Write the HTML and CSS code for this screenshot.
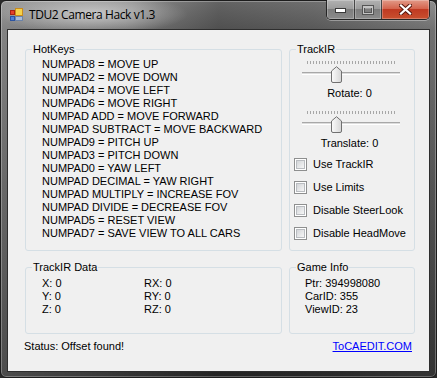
FILE: index.html
```html
<!DOCTYPE html>
<html>
<head>
<meta charset="utf-8">
<title>TDU2 Camera Hack v1.3</title>
<link rel="stylesheet" href="styles.css">
</head>
<body>
<div class="window">
  <div class="titlebar">
    <svg class="appicon" width="16" height="16" viewBox="0 0 16 16">
      <rect x="7.5" y="1.5" width="7" height="7" fill="#f6d24a" stroke="#c98a1c"/>
      <rect x="2.5" y="3.5" width="4" height="4" fill="#e2412b" stroke="#a82414"/>
      <rect x="2.5" y="9.5" width="4" height="4" fill="#4f7fd6" stroke="#2d54a0"/>
      <rect x="7.5" y="9.5" width="7" height="4" fill="#a9bcd8" stroke="#6c83a8"/>
    </svg>
    <span class="title">TDU2 Camera Hack v1.3</span>
    <div class="caps">
      <div class="cap min">
        <svg width="12" height="6" viewBox="0 0 12 6"><rect x="0.5" y="0.5" width="10" height="4" fill="#fff" stroke="#3a3a3a"/></svg>
      </div>
      <div class="cap max">
        <svg width="12" height="10" viewBox="0 0 12 10"><rect x="1.5" y="1.5" width="9" height="7" fill="none" stroke="#555" stroke-width="3"/><rect x="1.5" y="1.5" width="9" height="7" fill="none" stroke="#c4c4c4" stroke-width="1"/><rect x="2" y="2" width="8" height="1" fill="#c4c4c4"/></svg>
      </div>
      <div class="cap close">
        <svg width="13" height="11" viewBox="0 0 13 11"><path d="M2 1.5 L11 9.5 M11 1.5 L2 9.5" stroke="#5a1a10" stroke-width="4.2" stroke-linecap="square"/><path d="M2 1.5 L11 9.5 M11 1.5 L2 9.5" stroke="#fff" stroke-width="2.2" stroke-linecap="square"/></svg>
      </div>
    </div>
  </div>
  <div class="client">
    <div class="groups">
      <fieldset class="box">
        <legend>HotKeys</legend>
        <div class="hotkeys">
          <div>NUMPAD8 = MOVE UP</div>
          <div>NUMPAD2 = MOVE DOWN</div>
          <div>NUMPAD4 = MOVE LEFT</div>
          <div>NUMPAD6 = MOVE RIGHT</div>
          <div>NUMPAD ADD = MOVE FORWARD</div>
          <div>NUMPAD SUBTRACT = MOVE BACKWARD</div>
          <div>NUMPAD9 = PITCH UP</div>
          <div>NUMPAD3 = PITCH DOWN</div>
          <div>NUMPAD0 = YAW LEFT</div>
          <div>NUMPAD DECIMAL = YAW RIGHT</div>
          <div>NUMPAD MULTIPLY = INCREASE FOV</div>
          <div>NUMPAD DIVIDE = DECREASE FOV</div>
          <div>NUMPAD5 = RESET VIEW</div>
          <div>NUMPAD7 = SAVE VIEW TO ALL CARS</div>
        </div>
      </fieldset>
      <fieldset class="box">
        <legend>TrackIR</legend>
        <div class="trackir">
          <div class="slider">
            <div class="ticks"></div>
            <div class="track"></div>
            <svg class="thumb" width="11" height="17" viewBox="0 0 11 17">
              <defs><linearGradient id="tg" x1="0" y1="0" x2="1" y2="0"><stop offset="0" stop-color="#fbfbfb"/><stop offset="1" stop-color="#d6d6d6"/></linearGradient></defs>
              <path d="M0.5 5 L5.5 0.7 L10.5 5 L10.5 15 Q10.5 16.5 9 16.5 L2 16.5 Q0.5 16.5 0.5 15 Z" fill="url(#tg)" stroke="#707070"/>
            </svg>
          </div>
          <div class="slabel">Rotate: 0</div>
          <div class="slider second">
            <div class="ticks"></div>
            <div class="track"></div>
            <svg class="thumb" width="11" height="17" viewBox="0 0 11 17">
              <path d="M0.5 5 L5.5 0.7 L10.5 5 L10.5 15 Q10.5 16.5 9 16.5 L2 16.5 Q0.5 16.5 0.5 15 Z" fill="url(#tg)" stroke="#707070"/>
            </svg>
          </div>
          <div class="slabel">Translate: 0</div>
          <div class="checks">
            <div class="check"><span class="cb"></span>Use TrackIR</div>
            <div class="check"><span class="cb"></span>Use Limits</div>
            <div class="check"><span class="cb"></span>Disable SteerLook</div>
            <div class="check"><span class="cb"></span>Disable HeadMove</div>
          </div>
        </div>
      </fieldset>
      <fieldset class="box">
        <legend>TrackIR Data</legend>
        <div class="irdata">
          <div>X: 0</div><div>RX: 0</div>
          <div>Y: 0</div><div>RY: 0</div>
          <div>Z: 0</div><div>RZ: 0</div>
        </div>
      </fieldset>
      <fieldset class="box">
        <legend>Game Info</legend>
        <div class="gameinfo">
          <div>Ptr: 394998080</div>
          <div>CarID: 355</div>
          <div>ViewID: 23</div>
        </div>
      </fieldset>
    </div>
    <div class="statusrow">
      <span>Status: Offset found!</span>
      <a class="link" href="#">ToCAEDIT.COM</a>
    </div>
  </div>
</div>
</body>
</html>
```

FILE: styles.css
```css
html, body {
  margin: 0;
  padding: 0;
}
body {
  width: 437px;
  height: 378px;
  overflow: hidden;
  background: #2a2a2a;
  font-family: "Liberation Sans", Arial, sans-serif;
  font-size: 11px;
  line-height: 13px;
  color: #000;
}
.window {
  box-sizing: border-box;
  width: 437px;
  height: 378px;
  border: 1px solid #1c1c1c;
  border-radius: 6px;
  display: flex;
  flex-direction: column;
  box-shadow: inset 0 0 0 1px rgba(255,255,255,0.28);
  background:
    radial-gradient(ellipse 95px 20px at 92px 13px, rgba(255,255,255,0.55), rgba(255,255,255,0) 100%),
    linear-gradient(90deg, rgba(255,255,255,0.12) 0, rgba(255,255,255,0) 30%, rgba(0,0,0,0.3) 50%, rgba(0,0,0,0.22) 72%, rgba(0,0,0,0) 100%),
    linear-gradient(180deg, #8e8e8e 0, #727272 28px, #555 180px, #333 100%);
}
.titlebar {
  height: 28px;
  flex: none;
  display: flex;
  align-items: flex-start;
}
.appicon {
  margin: 6px 0 0 7px;
  flex: none;
}
.title {
  margin: 6px 0 0 5px;
  font-family: "Open Sans", "Noto Sans", sans-serif;
  font-size: 12px;
  line-height: 16px;
  color: #000;
  letter-spacing: -0.4px;
}
.caps {
  margin: -1px 6px 0 auto;
  display: flex;
  height: 20px;
  border: 1px solid rgba(25,25,25,0.85);
  border-top: none;
  border-radius: 0 0 5px 5px;
  overflow: hidden;
  box-shadow: 0 1px 0 rgba(255,255,255,0.35);
  box-sizing: border-box;
}
.cap {
  display: flex;
  align-items: center;
  justify-content: center;
  height: 100%;
  box-shadow: inset 0 0 0 1px rgba(255,255,255,0.25);
}
.cap.min {
  width: 27px;
  border-right: 1px solid rgba(30,30,30,0.7);
  background: linear-gradient(180deg, #b2b2b2 0, #9c9c9c 45%, #7d7d7d 50%, #8b8b8b 100%);
}
.cap.min svg { margin-top: 3px; }
.cap.max {
  width: 26px;
  border-right: 1px solid rgba(30,30,30,0.7);
  background: linear-gradient(180deg, #b2b2b2 0, #9c9c9c 45%, #7d7d7d 50%, #8b8b8b 100%);
}
.cap.close {
  width: 47px;
  background: linear-gradient(180deg, #e29a88 0, #d4654e 45%, #c03a22 50%, #c9502f 100%);
}
.client {
  flex: 1;
  margin: 0 6px 5px 6px;
  border: 1px solid #2e2e2e;
  background: #f0f0f0;
  padding: 13px 14px 0 17px;
  display: flex;
  flex-direction: column;
}
.groups {
  display: grid;
  grid-template-columns: 257px 126px;
  grid-template-rows: 208px 73px;
  column-gap: 7px;
  row-gap: 10px;
}
.box {
  margin: 0;
  padding: 0;
  min-width: 0;
  border: 1px solid #d5dfe5;
  border-radius: 3px;
}
.box legend {
  margin-left: 6px;
  padding: 0 1px;
  line-height: 13px;
}
.hotkeys {
  padding: 2px 0 0 16px;
}
.trackir {
  padding: 5px 0 0 0;
}
.slider {
  position: relative;
  height: 26px;
  margin-left: 12px;
  width: 98px;
}
.slider.second {
  margin-top: 11px;
}
.ticks {
  position: absolute;
  left: 5px;
  top: 0;
  width: 90px;
  height: 3px;
  background: repeating-linear-gradient(90deg, #a7a7a7 0, #a7a7a7 1px, transparent 1px, transparent 3px);
}
.track {
  position: absolute;
  left: 0;
  top: 11px;
  width: 98px;
  height: 3px;
  box-sizing: border-box;
  border-top: 1px solid #a8a8a8;
  border-bottom: 1px solid #fff;
  background: #dcdcdc;
}
.thumb {
  position: absolute;
  left: 29px;
  top: 5px;
}
.slabel {
  text-align: center;
  margin-left: 12px;
  width: 95px;
}
.checks {
  margin-top: 8px;
  padding-left: 4px;
  display: flex;
  flex-direction: column;
  gap: 10px;
}
.check {
  display: flex;
  align-items: flex-start;
  gap: 6px;
  height: 13px;
}
.cb {
  box-sizing: border-box;
  width: 13px;
  height: 13px;
  border: 1px solid #8e8f8f;
  background: #fff;
  padding: 1px;
  flex: none;
  position: relative;
}
.cb::after {
  content: "";
  display: block;
  box-sizing: border-box;
  width: 9px;
  height: 9px;
  border: 1px solid #b9bcc0;
  background: linear-gradient(135deg, #d3d5d8 0, #e8e9ea 60%, #f6f6f6 100%);
}
.irdata {
  padding: 3px 0 0 16px;
  display: grid;
  grid-template-columns: 102px auto;
}
.gameinfo {
  padding: 3px 0 0 15px;
}
.statusrow {
  margin: 6px 3px 0 -1px;
  display: flex;
  justify-content: space-between;
}
.link {
  color: #0000ff;
  text-decoration: underline;
}
```
